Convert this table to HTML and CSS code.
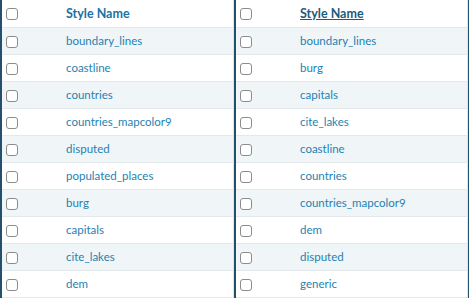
FILE: index.html
```html
<!DOCTYPE html>
<html lang="en">
<head>
<meta charset="utf-8">
<title>Styles</title>
<link rel="stylesheet" href="styles.css">
</head>
<body>
<div class="panels">
  <div class="panel">
    <table class="styles-table">
      <thead>
        <tr><th class="sel"><input type="checkbox"></th><th class="name"><a href="#">Style Name</a></th></tr>
      </thead>
      <tbody>
        <tr><td class="sel"><input type="checkbox"></td><td class="name"><a href="#">boundary_lines</a></td></tr>
        <tr><td class="sel"><input type="checkbox"></td><td class="name"><a href="#">coastline</a></td></tr>
        <tr><td class="sel"><input type="checkbox"></td><td class="name"><a href="#">countries</a></td></tr>
        <tr><td class="sel"><input type="checkbox"></td><td class="name"><a href="#">countries_mapcolor9</a></td></tr>
        <tr><td class="sel"><input type="checkbox"></td><td class="name"><a href="#">disputed</a></td></tr>
        <tr><td class="sel"><input type="checkbox"></td><td class="name"><a href="#">populated_places</a></td></tr>
        <tr><td class="sel"><input type="checkbox"></td><td class="name"><a href="#">burg</a></td></tr>
        <tr><td class="sel"><input type="checkbox"></td><td class="name"><a href="#">capitals</a></td></tr>
        <tr><td class="sel"><input type="checkbox"></td><td class="name"><a href="#">cite_lakes</a></td></tr>
        <tr><td class="sel"><input type="checkbox"></td><td class="name"><a href="#">dem</a></td></tr>
      </tbody>
    </table>
  </div>
  <div class="panel">
    <table class="styles-table">
      <thead>
        <tr><th class="sel"><input type="checkbox"></th><th class="name"><a href="#" class="sorted">Style Name</a></th></tr>
      </thead>
      <tbody>
        <tr><td class="sel"><input type="checkbox"></td><td class="name"><a href="#">boundary_lines</a></td></tr>
        <tr><td class="sel"><input type="checkbox"></td><td class="name"><a href="#">burg</a></td></tr>
        <tr><td class="sel"><input type="checkbox"></td><td class="name"><a href="#">capitals</a></td></tr>
        <tr><td class="sel"><input type="checkbox"></td><td class="name"><a href="#">cite_lakes</a></td></tr>
        <tr><td class="sel"><input type="checkbox"></td><td class="name"><a href="#">coastline</a></td></tr>
        <tr><td class="sel"><input type="checkbox"></td><td class="name"><a href="#">countries</a></td></tr>
        <tr><td class="sel"><input type="checkbox"></td><td class="name"><a href="#">countries_mapcolor9</a></td></tr>
        <tr><td class="sel"><input type="checkbox"></td><td class="name"><a href="#">dem</a></td></tr>
        <tr><td class="sel"><input type="checkbox"></td><td class="name"><a href="#">disputed</a></td></tr>
        <tr><td class="sel"><input type="checkbox"></td><td class="name"><a href="#">generic</a></td></tr>
      </tbody>
    </table>
  </div>
  <div class="panel panel-edge"></div>
</div>
</body>
</html>
```
FILE: styles.css
```css
html, body {
  margin: 0;
  padding: 0;
  background: #ffffff;
  overflow: hidden;
}

body {
  font-family: Lato, "Open Sans", sans-serif;
  font-size: 11.5px;
  color: #1d7fb0;
}

.panels {
  display: flex;
  align-items: flex-start;
}

.panel {
  width: 232px;
  border-left: 2px solid #23506d;
  flex: none;
}

.panel-edge {
  width: 10px;
  height: 298px;
}

.styles-table {
  width: 232px;
  border-collapse: collapse;
  border-right: 1px solid #dfe5ea;
}

.styles-table tr {
  height: 27px;
  border-bottom: 1px solid #e3e8ec;
}

.styles-table tbody tr:nth-child(odd) {
  background: #f0f5f8;
}

.styles-table th,
.styles-table td {
  padding: 0;
  vertical-align: middle;
  text-align: left;
}

.styles-table .sel {
  width: 60px;
  padding-left: 4px;
}

.styles-table input[type="checkbox"] {
  appearance: none;
  -webkit-appearance: none;
  display: block;
  width: 12px;
  height: 12px;
  margin: 2px 0 0 0;
  border: 1px solid #8c8c8c;
  border-radius: 3px;
  background: #ffffff;
  box-sizing: border-box;
}

.styles-table a {
  color: #1f82b2;
  text-decoration: none;
}

.styles-table th a {
  font-size: 12.5px;
  font-weight: bold;
  color: #1a72a3;
}

.styles-table th a.sorted {
  color: #1b5b7d;
  text-decoration: underline;
}
```
